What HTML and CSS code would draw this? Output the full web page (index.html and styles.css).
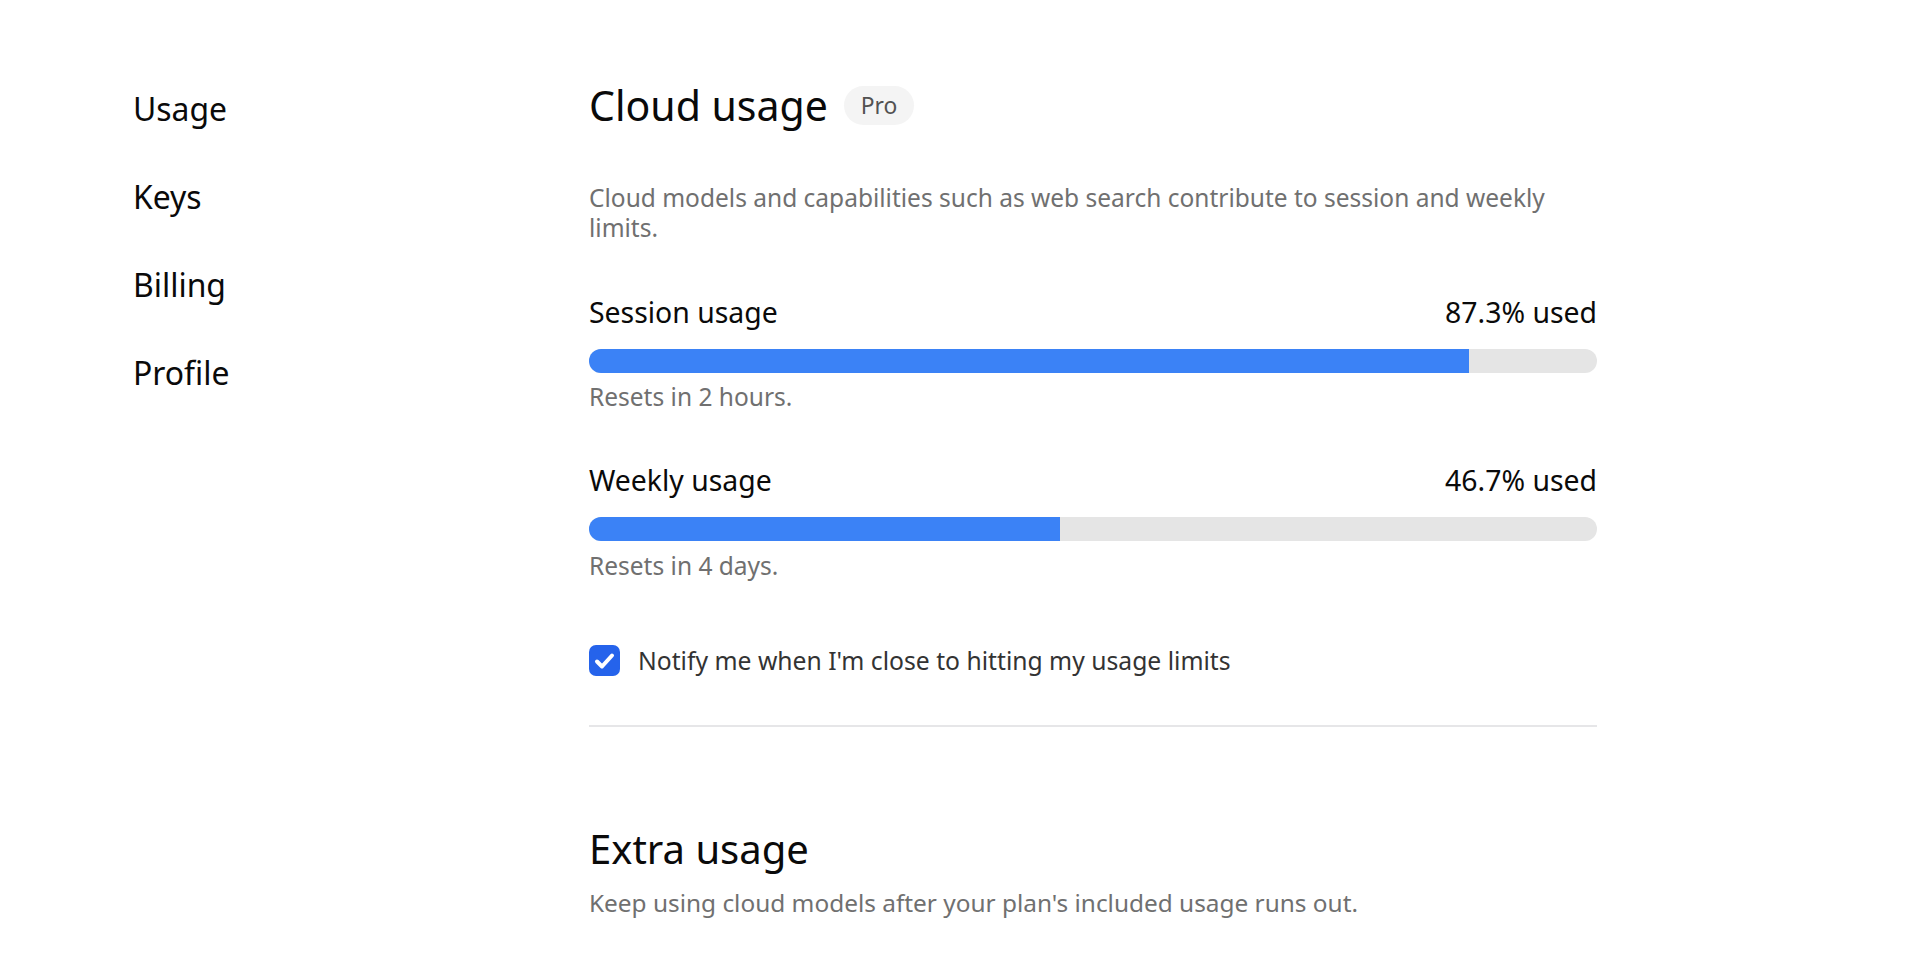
FILE: index.html
```html
<!DOCTYPE html>
<html lang="en">
<head>
<meta charset="utf-8">
<title>Settings – Usage</title>
<link rel="stylesheet" href="styles.css">
</head>
<body>
<div class="layout">
  <nav class="sidebar">
    <a class="nav-item" href="#">Usage</a>
    <a class="nav-item" href="#">Keys</a>
    <a class="nav-item" href="#">Billing</a>
    <a class="nav-item" href="#">Profile</a>
  </nav>

  <main class="content">
    <section class="section">
      <div class="title-row">
        <h1 class="title">Cloud usage</h1>
        <span class="badge">Pro</span>
      </div>
      <p class="desc lead">Cloud models and capabilities such as web search contribute to session and weekly limits.</p>

      <div class="meter first">
        <div class="meter-head">
          <span class="meter-label">Session usage</span>
          <span class="meter-value">87.3% used</span>
        </div>
        <div class="track"><div class="fill" style="width: 87.3%"></div></div>
        <p class="desc note">Resets in 2 hours.</p>
      </div>

      <div class="meter">
        <div class="meter-head">
          <span class="meter-label">Weekly usage</span>
          <span class="meter-value">46.7% used</span>
        </div>
        <div class="track"><div class="fill" style="width: 46.7%"></div></div>
        <p class="desc note">Resets in 4 days.</p>
      </div>

      <label class="check-row">
        <span class="checkbox">
          <svg viewBox="0 0 31 31" width="31" height="31" aria-hidden="true">
            <path d="M8 16.5l5 5 10-11" fill="none" stroke="#fff" stroke-width="4" stroke-linecap="round" stroke-linejoin="round"/>
          </svg>
        </span>
        <span class="check-text">Notify me when I'm close to hitting my usage limits</span>
      </label>
    </section>

    <hr class="divider">

    <section class="section extra">
      <h2 class="title">Extra usage</h2>
      <p class="desc extra-desc">Keep using cloud models after your plan's included usage runs out.</p>
    </section>
  </main>
</div>
</body>
</html>
```

FILE: styles.css
```css
* {
  box-sizing: border-box;
}

html, body {
  margin: 0;
  padding: 0;
  background: #ffffff;
}

body {
  font-family: "Noto Sans", "Open Sans", "Liberation Sans", sans-serif;
  color: #0a0a0a;
}

.layout {
  display: flex;
  padding-left: 133px;
}

/* left navigation */
.sidebar {
  width: 456px;
  flex: none;
  display: flex;
  flex-direction: column;
  gap: 44px;
  padding-top: 87px;
}

.nav-item {
  font-size: 31.9px;
  line-height: 44px;
  color: #0a0a0a;
  text-decoration: none;
}

/* main column */
.content {
  width: 1008px;
  padding-top: 77px;
}

.title-row {
  display: flex;
  align-items: center;
  gap: 16px;
}

.title {
  margin: 0;
  font-size: 41px;
  line-height: 56px;
  font-weight: 400;
  color: #0a0a0a;
}

.badge {
  display: inline-flex;
  align-items: center;
  height: 39px;
  padding: 0 17px;
  border-radius: 20px;
  background: #f4f4f4;
  color: #525252;
  font-size: 22.8px;
}

.desc {
  margin: 0;
  font-size: 24.5px;
  line-height: 30px;
  color: #707070;
}

.lead {
  margin-top: 50px;
}

.meter {
  margin-top: 49px;
}

.meter.first {
  margin-top: 50px;
}

.meter-head {
  display: flex;
  justify-content: space-between;
  align-items: baseline;
  font-size: 28.4px;
  line-height: 38px;
  color: #0a0a0a;
}

.track {
  margin-top: 18px;
  height: 24px;
  border-radius: 12px;
  background: #e5e5e5;
  overflow: hidden;
}

.fill {
  height: 100%;
  background: #3b82f6;
}

.note {
  margin-top: 9px;
}

.meter + .meter .note {
  margin-top: 10px;
}

.check-row {
  margin-top: 64px;
  display: flex;
  align-items: center;
  gap: 18px;
}

.checkbox {
  width: 31px;
  height: 31px;
  border-radius: 7px;
  background: #2563eb;
  display: flex;
  align-items: center;
  justify-content: center;
  flex: none;
}

.check-text {
  font-size: 24.7px;
  line-height: 30px;
  color: #333333;
}

.divider {
  margin: 49px 0 0;
  border: 0;
  height: 2px;
  background: #e6e6e8;
}

.extra {
  padding-top: 94px;
}

.extra .title {
  font-size: 40px;
}

.extra-desc {
  margin-top: 11px;
  font-size: 24.4px;
}
```
